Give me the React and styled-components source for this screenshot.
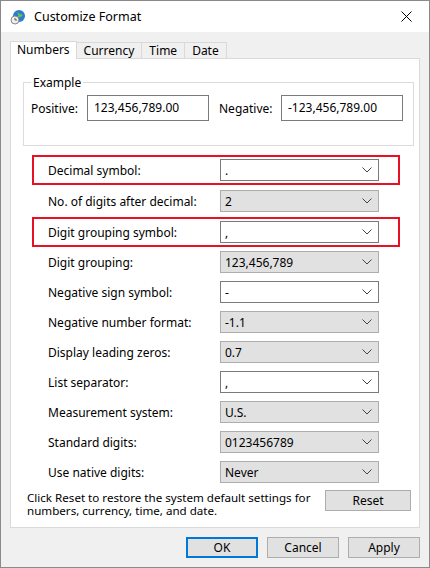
import React from "react";
import styled, { createGlobalStyle } from "styled-components";

const G = createGlobalStyle`
  html,body{margin:0;padding:0;background:#fff;}
  body{font-family:"Noto Sans","Liberation Sans",sans-serif;font-size:12px;color:#000;}
`;
const Win = styled.div`width:430px;height:568px;box-sizing:border-box;border:1px solid #8a8a8a;background:#f0f0f0;display:flex;flex-direction:column;`;
const Title = styled.div`height:31px;background:#fff;display:flex;align-items:center;padding:0 0 0 9px;gap:8px;font-size:12.5px;`;
const Close = styled.div`margin-left:auto;width:46px;height:31px;display:flex;align-items:center;justify-content:center;`;
const Body = styled.div`padding:8px 9px 0 9px;display:flex;flex-direction:column;`;
const Tabs = styled.div`display:flex;align-items:flex-end;height:18px;`;
const Tab = styled.div`height:${p=>p.$a?18:16}px;padding:0 ${p=>p.$a?6:7}px;box-sizing:border-box;border:1px solid #d9d9d9;border-bottom:none;background:${p=>p.$a?"#fff":"#f0f0f0"};margin-left:${p=>p.$a?0:-1}px;line-height:15px;position:relative;z-index:${p=>p.$a?1:0};top:${p=>p.$a?1:0}px;`;
const Panel = styled.div`background:#fff;border:1px solid #d9d9d9;height:470px;box-sizing:border-box;padding:15px 6px 0 12px;display:flex;flex-direction:column;`;
const Group = styled.fieldset`margin:0;border:1px solid #dcdcdc;padding:0 0 0 7px;height:72px;box-sizing:border-box;display:flex;align-items:flex-start;legend{padding:0 2px;margin-left:0;font-size:12px;}`;
const GroupRow = styled.div`display:flex;align-items:center;margin-top:4px;`;
const Lbl = styled.span`width:${p=>p.$w}px;`;
const Field = styled.div`width:${p=>p.$w}px;height:26px;box-sizing:border-box;border:1px solid #7a7a7a;padding-left:6px;line-height:23px;margin-right:10px;`;
const Rows = styled.div`display:flex;flex-direction:column;margin:9px 0 0 9px;width:368px;`;
const Row = styled.div`height:30px;box-sizing:border-box;border:2px solid ${p=>p.$hl?"#e81123":"transparent"};display:flex;align-items:center;padding-left:14px;margin-bottom:${p=>p.$mb||0}px;`;
const RowLbl = styled.span`width:172px;`;
const Combo = styled.div`width:159px;height:22px;box-sizing:border-box;border:1px solid ${p=>p.$w?"#7a7a7a":"#adadad"};background:${p=>p.$w?"#fff":"#e1e1e1"};display:flex;align-items:center;padding:0 6px 0 4px;`;
const Val = styled.span`flex:1;`;
const Footer = styled.div`display:flex;align-items:flex-start;margin-top:auto;margin-bottom:10px;padding-left:4px;`;
const Note = styled.div`width:298px;line-height:13px;font-size:11.6px;margin-top:1px;`;
const Btn = styled.div`width:${p=>p.$w||72}px;height:21px;box-sizing:border-box;border:${p=>p.$def?"2px solid #0078d7":"1px solid #adadad"};background:#e1e1e1;display:flex;align-items:center;justify-content:center;`;
const Buttons = styled.div`display:flex;justify-content:flex-end;gap:9px;padding:9px 0 0 0;`;

const Chev = () => (<svg width="10" height="6" viewBox="0 0 10 6"><path d="M0.5 0.5 L5 5 L9.5 0.5" fill="none" stroke="#444" strokeWidth="1"/></svg>);

const rows = [
  ["Decimal symbol:", ".", 1, 1],
  ["No. of digits after decimal:", "2", 0, 0],
  ["Digit grouping symbol:", ",", 1, 1],
  ["Digit grouping:", "123,456,789", 0, 0],
  ["Negative sign symbol:", "-", 1, 0],
  ["Negative number format:", "-1.1", 0, 0],
  ["Display leading zeros:", "0.7", 0, 0],
  ["List separator:", ",", 1, 0],
  ["Measurement system:", "U.S.", 0, 0],
  ["Standard digits:", "0123456789", 0, 0],
  ["Use native digits:", "Never", 0, 0],
];

export default function App(){
  return (<Win><G/>
    <Title>
      <svg width="16" height="16" viewBox="0 0 16 16"><circle cx="9" cy="7" r="6" fill="#2a7bd1"/><path d="M6 3 Q9 5 8 8 Q11 9 13 6" fill="#6cbf4a"/><circle cx="5" cy="11" r="4" fill="#eee" stroke="#888"/><path d="M5 9v2h2" stroke="#555" fill="none"/></svg>
      <span>Customize Format</span>
      <Close><svg width="11" height="11" viewBox="0 0 11 11"><path d="M0.5 0.5L10.5 10.5M10.5 0.5L0.5 10.5" stroke="#000" strokeWidth="1"/></svg></Close>
    </Title>
    <Body>
      <Tabs><Tab $a>Numbers</Tab><Tab>Currency</Tab><Tab>Time</Tab><Tab>Date</Tab></Tabs>
      <Panel>
        <Group><legend>Example</legend>
          <GroupRow><Lbl $w={56}>Positive:</Lbl><Field $w={122}>123,456,789.00</Field><Lbl $w={62}>Negative:</Lbl><Field $w={122}>-123,456,789.00</Field></GroupRow>
        </Group>
        <Rows>
          {rows.map(([l,v,w,h],i)=>(<Row key={i} $hl={h} $mb={i<2?1:0}><RowLbl>{l}</RowLbl><Combo $w={w}><Val>{v}</Val><Chev/></Combo></Row>))}
        </Rows>
        <Footer><Note>Click Reset to restore the system default settings for numbers, currency, time, and date.</Note><Btn $w={86}>Reset</Btn></Footer>
      </Panel>
      <Buttons><Btn $def>OK</Btn><Btn>Cancel</Btn><Btn>Apply</Btn></Buttons>
    </Body>
  </Win>);
}
